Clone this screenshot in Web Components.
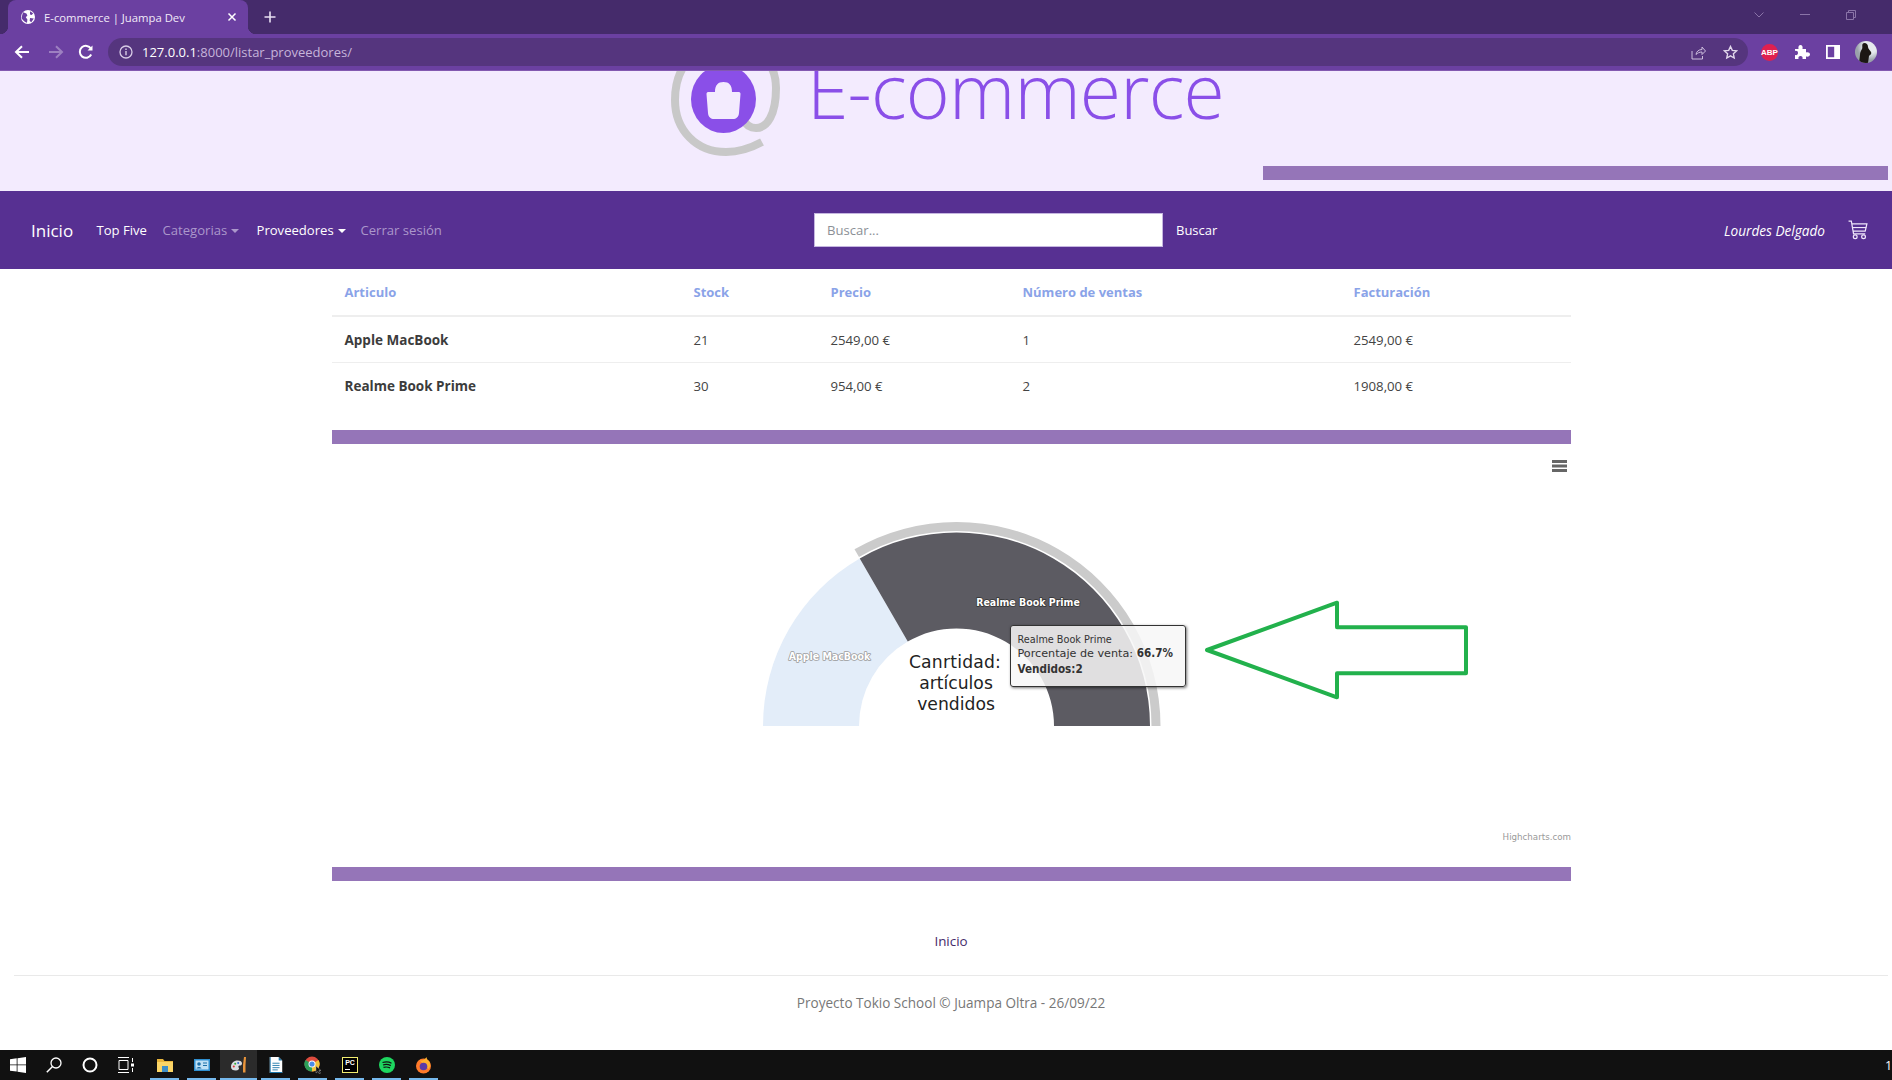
<!DOCTYPE html>
<html lang="es">
<head>
<meta charset="utf-8">
<title>E-commerce | Juampa Dev</title>
<style>
  html, body { margin: 0; height: 100%; overflow: hidden; background: #fff; }
  body { display: flex; flex-direction: column; height: 1080px; font-family: "Open Sans", "Liberation Sans", sans-serif; }
  page-main { flex: 1; min-height: 0; }
</style>
</head>
<body>
<browser-chrome></browser-chrome>
<site-header></site-header>
<site-nav></site-nav>
<page-main>
  <sales-table></sales-table>
  <purple-rule></purple-rule>
  <sales-chart></sales-chart>
  <purple-rule></purple-rule>
  <site-footer slot="footer"></site-footer>
</page-main>
<win-taskbar></win-taskbar>

<script>
class BrowserChrome extends HTMLElement {
  constructor() {
    super();
    this.attachShadow({ mode: 'open' });
    this.render();
  }

  render() {
    this.shadowRoot.innerHTML = `
      <style>
        :host { display: block; font-family: "Open Sans", "Liberation Sans", sans-serif; color: #fff; }
        .strip { height: 34px; background: #452b6b; display: flex; align-items: flex-end; padding-left: 8px; position: relative; }
        .tab { width: 240px; height: 34px; box-sizing: border-box; background: #6b40a1; border-radius: 8px 8px 0 0; display: flex; align-items: center; padding: 0 11px 0 12px; position: relative; }
        .tab::before, .tab::after { content: ''; position: absolute; bottom: 0; width: 8px; height: 8px; }
        .tab::before { left: -8px; background: radial-gradient(circle at 0 0, #452b6b 8px, #6b40a1 8.5px); }
        .tab::after { right: -8px; background: radial-gradient(circle at 100% 0, #452b6b 8px, #6b40a1 8.5px); }
        .tab span { flex: 1; font-size: 11.3px; margin-left: 8px; white-space: nowrap; color: #f1eaf8; }
        .plus { margin-left: 16px; align-self: center; display: flex; }
        .winctl { position: absolute; right: 0; top: 0; height: 29px; display: flex; align-items: center; }
        .winctl svg { display: block; }
        .bar { height: 36px; background: #6b40a1; border-bottom: 1px solid #8259b0; display: flex; align-items: center; }
        .nav { width: 108px; padding-left: 14px; box-sizing: border-box; display: flex; gap: 15px; flex: none; }
        .omni { width: 1640px; height: 28px; background: #55357e; border-radius: 14px; display: flex; align-items: center; padding-left: 11px; box-sizing: border-box; }
        .url { margin-left: 9px; font-size: 13px; color: #c6b4da; flex: 1; white-space: nowrap; }
        .url b { font-weight: 400; color: #fff; }
        .omni-r { display: flex; gap: 17px; padding-right: 10px; align-items: center; }
        .ext { display: flex; align-items: center; margin-left: 13px; gap: 16px; }
        .abp { width: 17px; height: 17px; border-radius: 50%; background: #e0204f; font: 700 8px "Liberation Sans", sans-serif; display: flex; align-items: center; justify-content: center; }
        .avatar { width: 22px; height: 22px; border-radius: 50%; background: radial-gradient(circle at 70% 25%, #e6e9ee 30%, #9aa2aa 60%); overflow: hidden; margin-left: -1px; }
      </style>
      <div class="strip">
        <div class="tab">
          <svg width="16" height="16" viewBox="0 0 16 16"><circle cx="8" cy="8" r="7" fill="#fff"/><path d="M3 3.2l3.4 1.2 1 2.2-1.6 1.6 1.6 2.2-.4 3.4C5 13.200 2 11 1.600 8.500zM10 2.200l3.200 2-1.500 1.700-1.700-.4zM10 9l3.800.4-2.500 3.800-1.600-1.200z" fill="#6b40a1"/></svg>
          <span>E-commerce | Juampa Dev</span>
          <svg width="10" height="10" viewBox="0 0 10 10"><path d="M1.500 1.500l7 7M8.500 1.500l-7 7" stroke="#fff" stroke-width="1.500"/></svg>
        </div>
        <div class="plus"><svg width="12" height="12" viewBox="0 0 12 12"><path d="M6 .5v11M.5 6h11" stroke="#e8e0f2" stroke-width="1.600"/></svg></div>
        <div class="winctl">
          <svg width="10" height="6" viewBox="0 0 10 6" style="margin-right:36px"><path d="M.5.5L5 5 9.500.5" fill="none" stroke="#8a74a8"/></svg>
          <svg width="10" height="1" viewBox="0 0 10 1" style="margin-right:36px"><path d="M0 .5h10" stroke="#8a74a8"/></svg>
          <svg width="10" height="10" viewBox="0 0 10 10" style="margin-right:36px"><path d="M.5 2.500h7v7h-7zM2.500 2.500v-2h7v7h-2" fill="none" stroke="#8a74a8"/></svg>
        </div>
      </div>
      <div class="bar">
        <div class="nav">
          <svg width="16" height="16" viewBox="0 0 16 16"><path d="M15 8H2.500M8 2.200L2 8l6 5.800" fill="none" stroke="#fff" stroke-width="2"/></svg>
          <svg width="16" height="16" viewBox="0 0 16 16" style="margin-left:3px"><path d="M1 8h12.500M8 2.200L14 8l-6 5.800" fill="none" stroke="#9d80c1" stroke-width="2"/></svg>
          <svg width="16" height="16" viewBox="0 0 16 16" style="margin-left:-1px"><path d="M13.200 10.500A6 6 0 1 1 13 4.800" fill="none" stroke="#fff" stroke-width="2"/><path d="M14.500 1.500v5h-5z" fill="#fff"/></svg>
        </div>
        <div class="omni">
          <svg width="14" height="14" viewBox="0 0 14 14"><circle cx="7" cy="7" r="6" fill="none" stroke="#d8cce6" stroke-width="1.300"/><path d="M7 6v4.200M7 3.500v1.400" stroke="#d8cce6" stroke-width="1.400"/></svg>
          <div class="url"><b>127.0.0.1</b>:8000/listar_proveedores/</div>
          <div class="omni-r">
            <svg width="15" height="15" viewBox="0 0 15 15"><path d="M1 6v8h10.500v-3M5 9.500c.3-3 2.800-5 6-5V2l3.500 4-3.500 3.500V7C8.500 7 6.500 8 5 9.500z" fill="none" stroke="#cdbfdd" stroke-width="1"/></svg>
            <svg width="15" height="15" viewBox="0 0 15 15"><path d="M7.500 1.500l1.800 3.900 4.200.5-3.100 2.900.8 4.200-3.700-2.100-3.700 2.100.8-4.200L1.500 5.900l4.200-.5z" fill="none" stroke="#e2d8ec" stroke-width="1.400"/></svg>
          </div>
        </div>
        <div class="ext">
          <div class="abp">ABP</div>
          <svg width="16" height="16" viewBox="0 0 16 16"><path d="M1 5h3.500C4 2.500 5 1 6.500 1S9 2.500 8.500 5H12v3.500c2.500-.5 4 .5 4 2s-1.500 2.500-4 2V15H8.500c.5-2-.5-3-2-3s-2.500 1-2 3H1v-4c2 .5 3-.5 3-2S3 6.500 1 7z" fill="#fff"/></svg>
          <svg width="14" height="14" viewBox="0 0 14 14"><path fill-rule="evenodd" d="M0 0h14v14H0zM1.800 1.800v10.400h6.400V1.800z" fill="#fff"/></svg>
          <div class="avatar"><svg width="22" height="22" viewBox="0 0 22 22"><path d="M9 2c3 0 4 2 4 4s2 3 3 5-1 3-2 4l-1 7H4l1-8c0-3 1-4 2-6S6 3 9 2z" fill="#1c1714"/></svg></div>
        </div>
      </div>
    `;
  }
}

class SiteHeader extends HTMLElement {
  constructor() {
    super();
    this.attachShadow({ mode: 'open' });
    this.render();
  }

  render() {
    this.shadowRoot.innerHTML = `
      <style>
        :host { display: block; height: 120px; background: #f3ebfe; overflow: hidden; }
        .box { height: 100%; display: flex; flex-direction: column; justify-content: space-between; }
        .brand { display: flex; align-items: flex-start; height: 85px; padding-left: 664px; }
        .brand svg { flex: none; margin-top: -11px; overflow: hidden; }
        h1 { margin: -32px 0 0 23px; font: 300 75px/102px "Open Sans", "Liberation Sans", sans-serif; color: #8a4fe8; white-space: nowrap; letter-spacing: -.8px; }
        .rule { align-self: flex-end; width: 625px; height: 14px; margin: 0 4px 11px 0; background: #9575b8; }
      </style>
      <div class="box">
        <div class="brand">
          <svg width="120" height="100" viewBox="0 0 120 100">
            <path d="M98 82C85 89 72 92 62 92 32 92 11 70 11 40 11 5 32-15 62-15 92-15 112 0 112 28 112 55 103 68 92 68 86 68 82 65 80 60" fill="none" stroke="#c8c8c8" stroke-width="8"/>
            <ellipse cx="59.500" cy="39" rx="32.500" ry="34" fill="#8a4fe8"/>
            <path d="M44 32h7c0-7 3-10 8.500-10S68 25 68 32h7c1 0 1.500 1 1.500 2L75 53c-.3 4-3 6-6 6H50c-3 0-5.700-2-6-6l-1.500-19c0-1 .5-2 1.500-2z" fill="#f3ebfe"/>
          </svg>
          <h1>E-commerce</h1>
        </div>
        <div class="rule"></div>
      </div>
    `;
  }
}

class SiteNav extends HTMLElement {
  constructor() {
    super();
    this.attachShadow({ mode: 'open' });
    this.render();
  }

  render() {
    this.shadowRoot.innerHTML = `
      <style>
        :host { display: block; height: 78px; background: #573092; font-family: "Open Sans", "Liberation Sans", sans-serif; }
        nav { height: 100%; display: flex; align-items: center; font-size: 13.1px; color: #fff; white-space: nowrap; }
        .brand { font-size: 17px; margin-left: 31px; width: 65.500px; color: #fff; }
        a { color: inherit; text-decoration: none; }
        .links { display: flex; width: 717.500px; }
        .off { color: #ab97cb; }
        .top { width: 66px; }
        .cat { width: 94px; }
        .prov { width: 104px; }
        .caret::after { content: ''; display: inline-block; margin-left: 4px; vertical-align: 2px; border: 4px solid transparent; border-top-color: currentColor; border-bottom: 0; }
        .search { width: 349px; height: 34px; box-sizing: border-box; border: 1px solid #c5b6e0; background: #fff; color: #8b8f96; padding: 0 12px; line-height: 32px; flex: none; }
        .go { margin-left: 13px; font-size: 13px; }
        .who { margin-left: auto; font-style: italic; font-size: 13.600px; }
        .cart { margin: 0 24px 0 23px; display: flex; }
      </style>
      <nav>
        <a class="brand" href="#">Inicio</a>
        <div class="links">
          <a class="top" href="#">Top Five</a>
          <a class="cat off caret" href="#">Categorias</a>
          <a class="prov caret" href="#">Proveedores</a>
          <a class="off" href="#">Cerrar sesión</a>
        </div>
        <div class="search">Buscar...</div>
        <a class="go" href="#">Buscar</a>
        <span class="who">Lourdes Delgado</span>
        <a class="cart" href="#">
          <svg width="20" height="20" viewBox="0 0 18 18"><path d="M.5 1H3l2 11.500h10.500M3.700 3.500h13.300L15.500 10H5" fill="none" stroke="#f0e6fb" stroke-width="1.100"/><path d="M4.400 6.800h12" stroke="#f0e6fb"/><circle cx="6.500" cy="15" r="1.700" fill="none" stroke="#f0e6fb" stroke-width="1.100"/><circle cx="14" cy="15" r="1.700" fill="none" stroke="#f0e6fb" stroke-width="1.100"/></svg>
        </a>
      </nav>
    `;
  }
}

class PageMain extends HTMLElement {
  constructor() {
    super();
    this.attachShadow({ mode: 'open' });
    this.render();
  }

  render() {
    this.shadowRoot.innerHTML = `
      <style>
        :host { display: block; padding: 0 4px 0 14px; }
        .col { width: 1239px; margin: 0 auto; }
      </style>
      <div class="col"><slot></slot></div>
      <slot name="footer"></slot>
    `;
  }
}

class PurpleRule extends HTMLElement {
  constructor() {
    super();
    this.attachShadow({ mode: 'open' });
    this.shadowRoot.innerHTML = `<style>:host { display: block; height: 14px; background: #9575b8; }</style>`;
  }
}

class SalesTable extends HTMLElement {
  constructor() {
    super();
    this.attachShadow({ mode: 'open' });
    this.rows = [
      ['Apple MacBook', '21', '2549,00 €', '1', '2549,00 €'],
      ['Realme Book Prime', '30', '954,00 €', '2', '1908,00 €']
    ];
    this.render();
  }

  render() {
    this.shadowRoot.innerHTML = `
      <style>
        :host { display: block; margin-bottom: 22px; font-family: "Open Sans", "Liberation Sans", sans-serif; font-size: 13.2px; color: #444; }
        table { width: 100%; border-collapse: collapse; table-layout: fixed; }
        th, td { text-align: left; padding: 0 12px 0 13px; font-weight: 400; }
        th { height: 47px; font-weight: 700; font-size: 13px; color: #8aa3e8; border-bottom: 2px solid #eeeeee; box-sizing: border-box; }
        td { height: 45px; border-bottom: 1px solid #eeeeee; }
        tr:last-child td { border-bottom: 0; }
        td:first-child { font-weight: 700; font-size: 13.500px; color: #3c3c3c; }
      </style>
      <table>
        <colgroup><col style="width:349px"><col style="width:137px"><col style="width:192px"><col style="width:331px"><col></colgroup>
        <thead><tr><th>Articulo</th><th>Stock</th><th>Precio</th><th>Número de ventas</th><th>Facturación</th></tr></thead>
        <tbody>
          ${this.rows.map(r => `<tr>${r.map(c => `<td>${c}</td>`).join('')}</tr>`).join('')}
        </tbody>
      </table>
    `;
  }
}

class SalesChart extends HTMLElement {
  constructor() {
    super();
    this.attachShadow({ mode: 'open' });
    this.render();
  }

  render() {
    this.shadowRoot.innerHTML = `
      <style>
        :host { display: block; position: relative; height: 423px; font-family: "DejaVu Sans", Verdana, sans-serif; }
        svg { display: block; }
        .tip { position: absolute; left: 678px; top: 181px; width: 176px; height: 62px; box-sizing: border-box; padding: 7px 7px; background: rgba(247,247,247,.85); border: 1px solid #333; border-radius: 3px; box-shadow: 1px 1px 3px rgba(0,0,0,.55); font-size: 11.200px; line-height: 14.500px; color: #333; white-space: nowrap; }
        .tip small { display: block; font-size: 9.700px; line-height: 13px; }
        .tip b { font-family: "DejaVu Sans Condensed", "DejaVu Sans", sans-serif; font-size: 11.600px; }
      </style>
      <svg width="1239" height="423" viewBox="0 0 1239 423">
        <g transform="translate(624.5 282)">
          <path d="M-193.500 0A193.500 193.500 0 0 1-96.750-167.600L-48.750-84.400A97.500 97.500 0 0 0-97.500 0Z" fill="#e3edf9"/>
          <path d="M-96.750-167.600A193.500 193.500 0 0 1 193.500 0L97.500 0A97.500 97.500 0 0 0-48.750-84.400Z" fill="#5c5b62"/>
          <path d="M-102-176.700A204 204 0 0 1 204 0L195 0A195 195 0 0 0-97.500-168.900Z" fill="#cbcbcb"/>
        </g>
        <g text-anchor="middle" font-family="DejaVu Sans, Verdana, sans-serif" fill="#222" font-size="17.200">
          <text x="623" y="224" letter-spacing=".2">Canrtidad:</text>
          <text x="624" y="245">artículos</text>
          <text x="624" y="266">vendidos</text>
        </g>
        <g font-size="10.500" font-weight="700" text-anchor="middle" font-family="DejaVu Sans Condensed, DejaVu Sans, sans-serif" paint-order="stroke" stroke-linejoin="round">
          <text x="696" y="162" fill="#fff" stroke="#333" stroke-width="1.500">Realme Book Prime</text>
          <text x="497.500" y="216" fill="#fff" stroke="#9a9a9a" stroke-width="1.500">Apple MacBook</text>
        </g>
        <text x="1239" y="396" text-anchor="end" font-size="8.700" fill="#999">Highcharts.com</text>
        <path d="M1220 17.500h15M1220 22h15M1220 26.500h15" stroke="#666" stroke-width="3"/>
        <path d="M875 206L1005 158.700V183.300H1134V229.300H1005V253.300Z" fill="none" stroke="#22b14c" stroke-width="4" stroke-linejoin="round"/>
      </svg>
      <div class="tip">
        <small>Realme Book Prime</small>
        Porcentaje de venta: <b>66.7%</b><br>
        <b>Vendidos:2</b>
      </div>
    `;
  }
}

class SiteFooter extends HTMLElement {
  constructor() {
    super();
    this.attachShadow({ mode: 'open' });
    this.render();
  }

  render() {
    this.shadowRoot.innerHTML = `
      <style>
        :host { display: block; font-family: "Open Sans", "Liberation Sans", sans-serif; font-size: 13.4px; text-align: center; }
        a { display: block; padding-top: 50px; line-height: 20px; color: #452b6b; text-decoration: none; }
        hr { margin: 24px 0 0; border: 0; border-top: 1px solid #e9e9e9; }
        p { margin: 17px 0 0; line-height: 20px; color: #777; font-size: 13.550px; }
      </style>
      <a href="#">Inicio</a>
      <hr>
      <p>Proyecto Tokio School © Juampa Oltra - 26/09/22</p>
    `;
  }
}

class WinTaskbar extends HTMLElement {
  constructor() {
    super();
    this.attachShadow({ mode: 'open' });
    this.render();
  }

  render() {
    this.shadowRoot.innerHTML = `
      <style>
        :host { display: block; height: 30px; background: #111; color: #fff; font: 12px "Open Sans", "Liberation Sans", sans-serif; overflow: hidden; }
        .bar { height: 30px; display: flex; align-items: center; }
        .sys { display: flex; width: 144px; flex: none; }
        .sys div { width: 36px; display: flex; justify-content: center; }
        .apps { display: flex; margin-left: 2px; }
        .app { width: 37px; height: 30px; display: flex; align-items: center; justify-content: center; position: relative; }
        .app.open::after { content: ''; position: absolute; left: 4px; right: 4px; bottom: 0; height: 2px; background: #76b9ed; }
        .app.active { background: #2b2b2b; }
        .app.active::after { left: 0; right: 0; }
        .clock { margin-left: auto; font-size: 12.5px; width: 7px; overflow: hidden; }
      </style>
      <div class="bar">
        <div class="sys">
          <div><svg width="16" height="16" viewBox="0 0 16 16"><path d="M0 2.300l6.700-1V7.500H0zM7.500 1.200L16 0v7.500H7.500zM0 8.300h6.700v6.300L0 13.700zM7.500 8.300H16V16l-8.500-1.200z" fill="#fff"/></svg></div>
          <div><svg width="16" height="16" viewBox="0 0 16 16"><circle cx="10" cy="6" r="5" fill="none" stroke="#fff" stroke-width="1.300"/><path d="M6.500 9.500L.8 15.200" stroke="#fff" stroke-width="1.500"/></svg></div>
          <div><svg width="16" height="16" viewBox="0 0 16 16"><circle cx="8" cy="8" r="6.500" fill="none" stroke="#fff" stroke-width="2"/></svg></div>
          <div><svg width="16" height="16" viewBox="0 0 16 16"><path d="M0 .5h11M0 15.500h11M1 3.500h9v9H1zM14.500 1v4M14.500 11v4" fill="none" stroke="#fff"/><rect x="13" y="6.500" width="3" height="3" fill="#fff"/></svg></div>
        </div>
        <div class="apps">
          <div class="app open"><svg width="16" height="14" viewBox="0 0 16 14"><path d="M0 1h6l1.500 2H16v3H0z" fill="#e8b53c"/><path d="M0 4h16v10H0z" fill="#fbd566"/><path d="M5 8h6v6H5z" fill="#3e8ec7"/></svg></div>
          <div class="app open"><svg width="16" height="12" viewBox="0 0 16 12"><rect width="16" height="12" fill="#2f8fd0"/><rect x="1.500" y="1.500" width="13" height="9" fill="#bfe0f5"/><circle cx="5" cy="5" r="1.800" fill="#1d6fa8"/><path d="M2.500 9.500c.5-2 4.500-2 5 0zM9 3.500h4v1H9zM9 6h4v1H9z" fill="#1d6fa8"/></svg></div>
          <div class="app open active"><svg width="16" height="16" viewBox="0 0 16 16"><path d="M0 10c0-4 3-6.500 6.500-6.500 3 0 4.500 1.300 4.500 3s-1.500 2-2.500 2-1.500 1.200-.7 2.300c.8 1.200-.5 2.700-3 2.700C2 13.500 0 12.500 0 10z" fill="#d9dde2"/><circle cx="2.800" cy="9.500" r="1" fill="#d33"/><circle cx="4.200" cy="6.800" r="1" fill="#3a3"/><circle cx="7.200" cy="6" r="1" fill="#36c"/><path d="M12 8l1-8h2l-.5 8v7.500H12z" fill="#e8943a"/></svg></div>
          <div class="app open"><svg width="14" height="16" viewBox="0 0 14 18"><path d="M0 0h10l4 4v14H0z" fill="#fff"/><path d="M10 0l4 4h-4z" fill="#1b75a8"/><path d="M0 0h1v18H0zM1 17h13v1H1z" fill="#1b75a8"/><path d="M3 7h8M3 9.500h8M3 12h8M3 14.500h6" stroke="#1b75a8"/></svg></div>
          <div class="app open"><svg width="18" height="18" viewBox="0 0 18 18"><circle cx="8" cy="8" r="7.500" fill="#dd4b3e"/><path d="M8 8L14.500 4A7.500 7.500 0 0 1 8 15.500z" fill="#f2c33a"/><path d="M8 8L8 15.500A7.500 7.500 0 0 1 1.500 4z" fill="#2c9f58"/><circle cx="8" cy="8" r="3.500" fill="#fff"/><circle cx="8" cy="8" r="2.600" fill="#4a8be8"/><path d="M12 10v7l2-1.500 1.500 2.500 1-1-1.500-2.500h2z" fill="#111" stroke="#ccc" stroke-width=".4"/></svg></div>
          <div class="app open"><svg width="16" height="16" viewBox="0 0 16 16"><rect x=".5" y=".5" width="15" height="15" fill="#000" stroke="#f2ed6f"/><text x="8" y="8" text-anchor="middle" font-size="7" font-weight="700" fill="#fff" font-family="Liberation Sans, sans-serif">PC</text><path d="M3 12.500h5" stroke="#fff"/></svg></div>
          <div class="app open"><svg width="16" height="16" viewBox="0 0 16 16"><circle cx="8" cy="8" r="8" fill="#1ed760"/><path d="M3.500 5.500c3-1 6.500-.8 9 .7M4 8c2.500-.8 5.500-.6 7.800.6M4.500 10.400c2-.6 4.500-.5 6.500.5" fill="none" stroke="#111" stroke-width="1.200"/></svg></div>
          <div class="app open"><svg width="17" height="17" viewBox="0 0 17 17"><circle cx="8.500" cy="9" r="7.500" fill="#ff7a2a"/><path d="M3 2c1 1.500 2 1.500 3.500 1.500 2 0 4-2 5-3.500 0 1.500 1 3 2.500 4 2 3 1.500 6-.5 8z" fill="#ffb02e"/><circle cx="8.500" cy="9.500" r="3.800" fill="#5b3aa8"/></svg></div>
        </div>
        <div class="clock">1</div>
      </div>
    `;
  }
}

customElements.define('browser-chrome', BrowserChrome);
customElements.define('site-header', SiteHeader);
customElements.define('site-nav', SiteNav);
customElements.define('page-main', PageMain);
customElements.define('purple-rule', PurpleRule);
customElements.define('sales-table', SalesTable);
customElements.define('sales-chart', SalesChart);
customElements.define('site-footer', SiteFooter);
customElements.define('win-taskbar', WinTaskbar);
</script>
</body>
</html>
